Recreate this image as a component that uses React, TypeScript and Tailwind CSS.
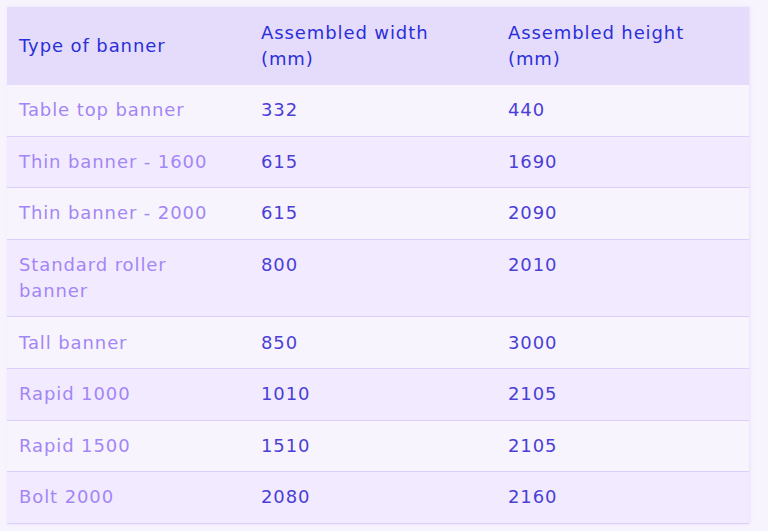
import React from "react";

const rows: [React.ReactNode, string, string][] = [
  ["Table top banner", "332", "440"],
  ["Thin banner - 1600", "615", "1690"],
  ["Thin banner - 2000", "615", "2090"],
  [<>Standard roller<br />banner</>, "800", "2010"],
  ["Tall banner", "850", "3000"],
  ["Rapid 1000", "1010", "2105"],
  ["Rapid 1500", "1510", "2105"],
  ["Bolt 2000", "2080", "2160"],
];

export default function App() {
  return (
    <div
      className="w-[768px] h-[531px] bg-[#f8f4fe] pt-[7px] pl-[7px] overflow-hidden"
      style={{ fontFamily: '"DejaVu Sans", sans-serif' }}
    >
      <table className="w-[742px] border-collapse table-fixed text-[18px] leading-[26px] tracking-[0.9px] shadow-[1px_0_3px_rgba(200,185,250,0.35)]">
        <colgroup>
          <col className="w-[242px]" />
          <col className="w-[247px]" />
          <col className="w-[253px]" />
        </colgroup>
        <thead>
          <tr className="bg-[#e5dcfc] text-[#2b2fd8]">
            <th className="text-left font-normal align-middle px-3 py-[13px]">Type of banner</th>
            <th className="text-left font-normal align-top px-3 py-[13px]">
              Assembled width
              <br />
              (mm)
            </th>
            <th className="text-left font-normal align-top px-3 py-[13px]">
              Assembled height
              <br />
              (mm)
            </th>
          </tr>
        </thead>
        <tbody>
          {rows.map((r, i) => (
            <tr
              key={i}
              className={`border-b border-[#dccffb] ${i % 2 === 0 ? "bg-[#f8f4fe]" : "bg-[#f2ebff]"}`}
            >
              <td className="px-3 py-[12.3px] align-top text-[#a386f5]">{r[0]}</td>
              <td className="px-3 py-[12.3px] align-top text-[#4b3fd6]">{r[1]}</td>
              <td className="px-3 py-[12.3px] align-top text-[#4b3fd6]">{r[2]}</td>
            </tr>
          ))}
        </tbody>
      </table>
    </div>
  );
}
